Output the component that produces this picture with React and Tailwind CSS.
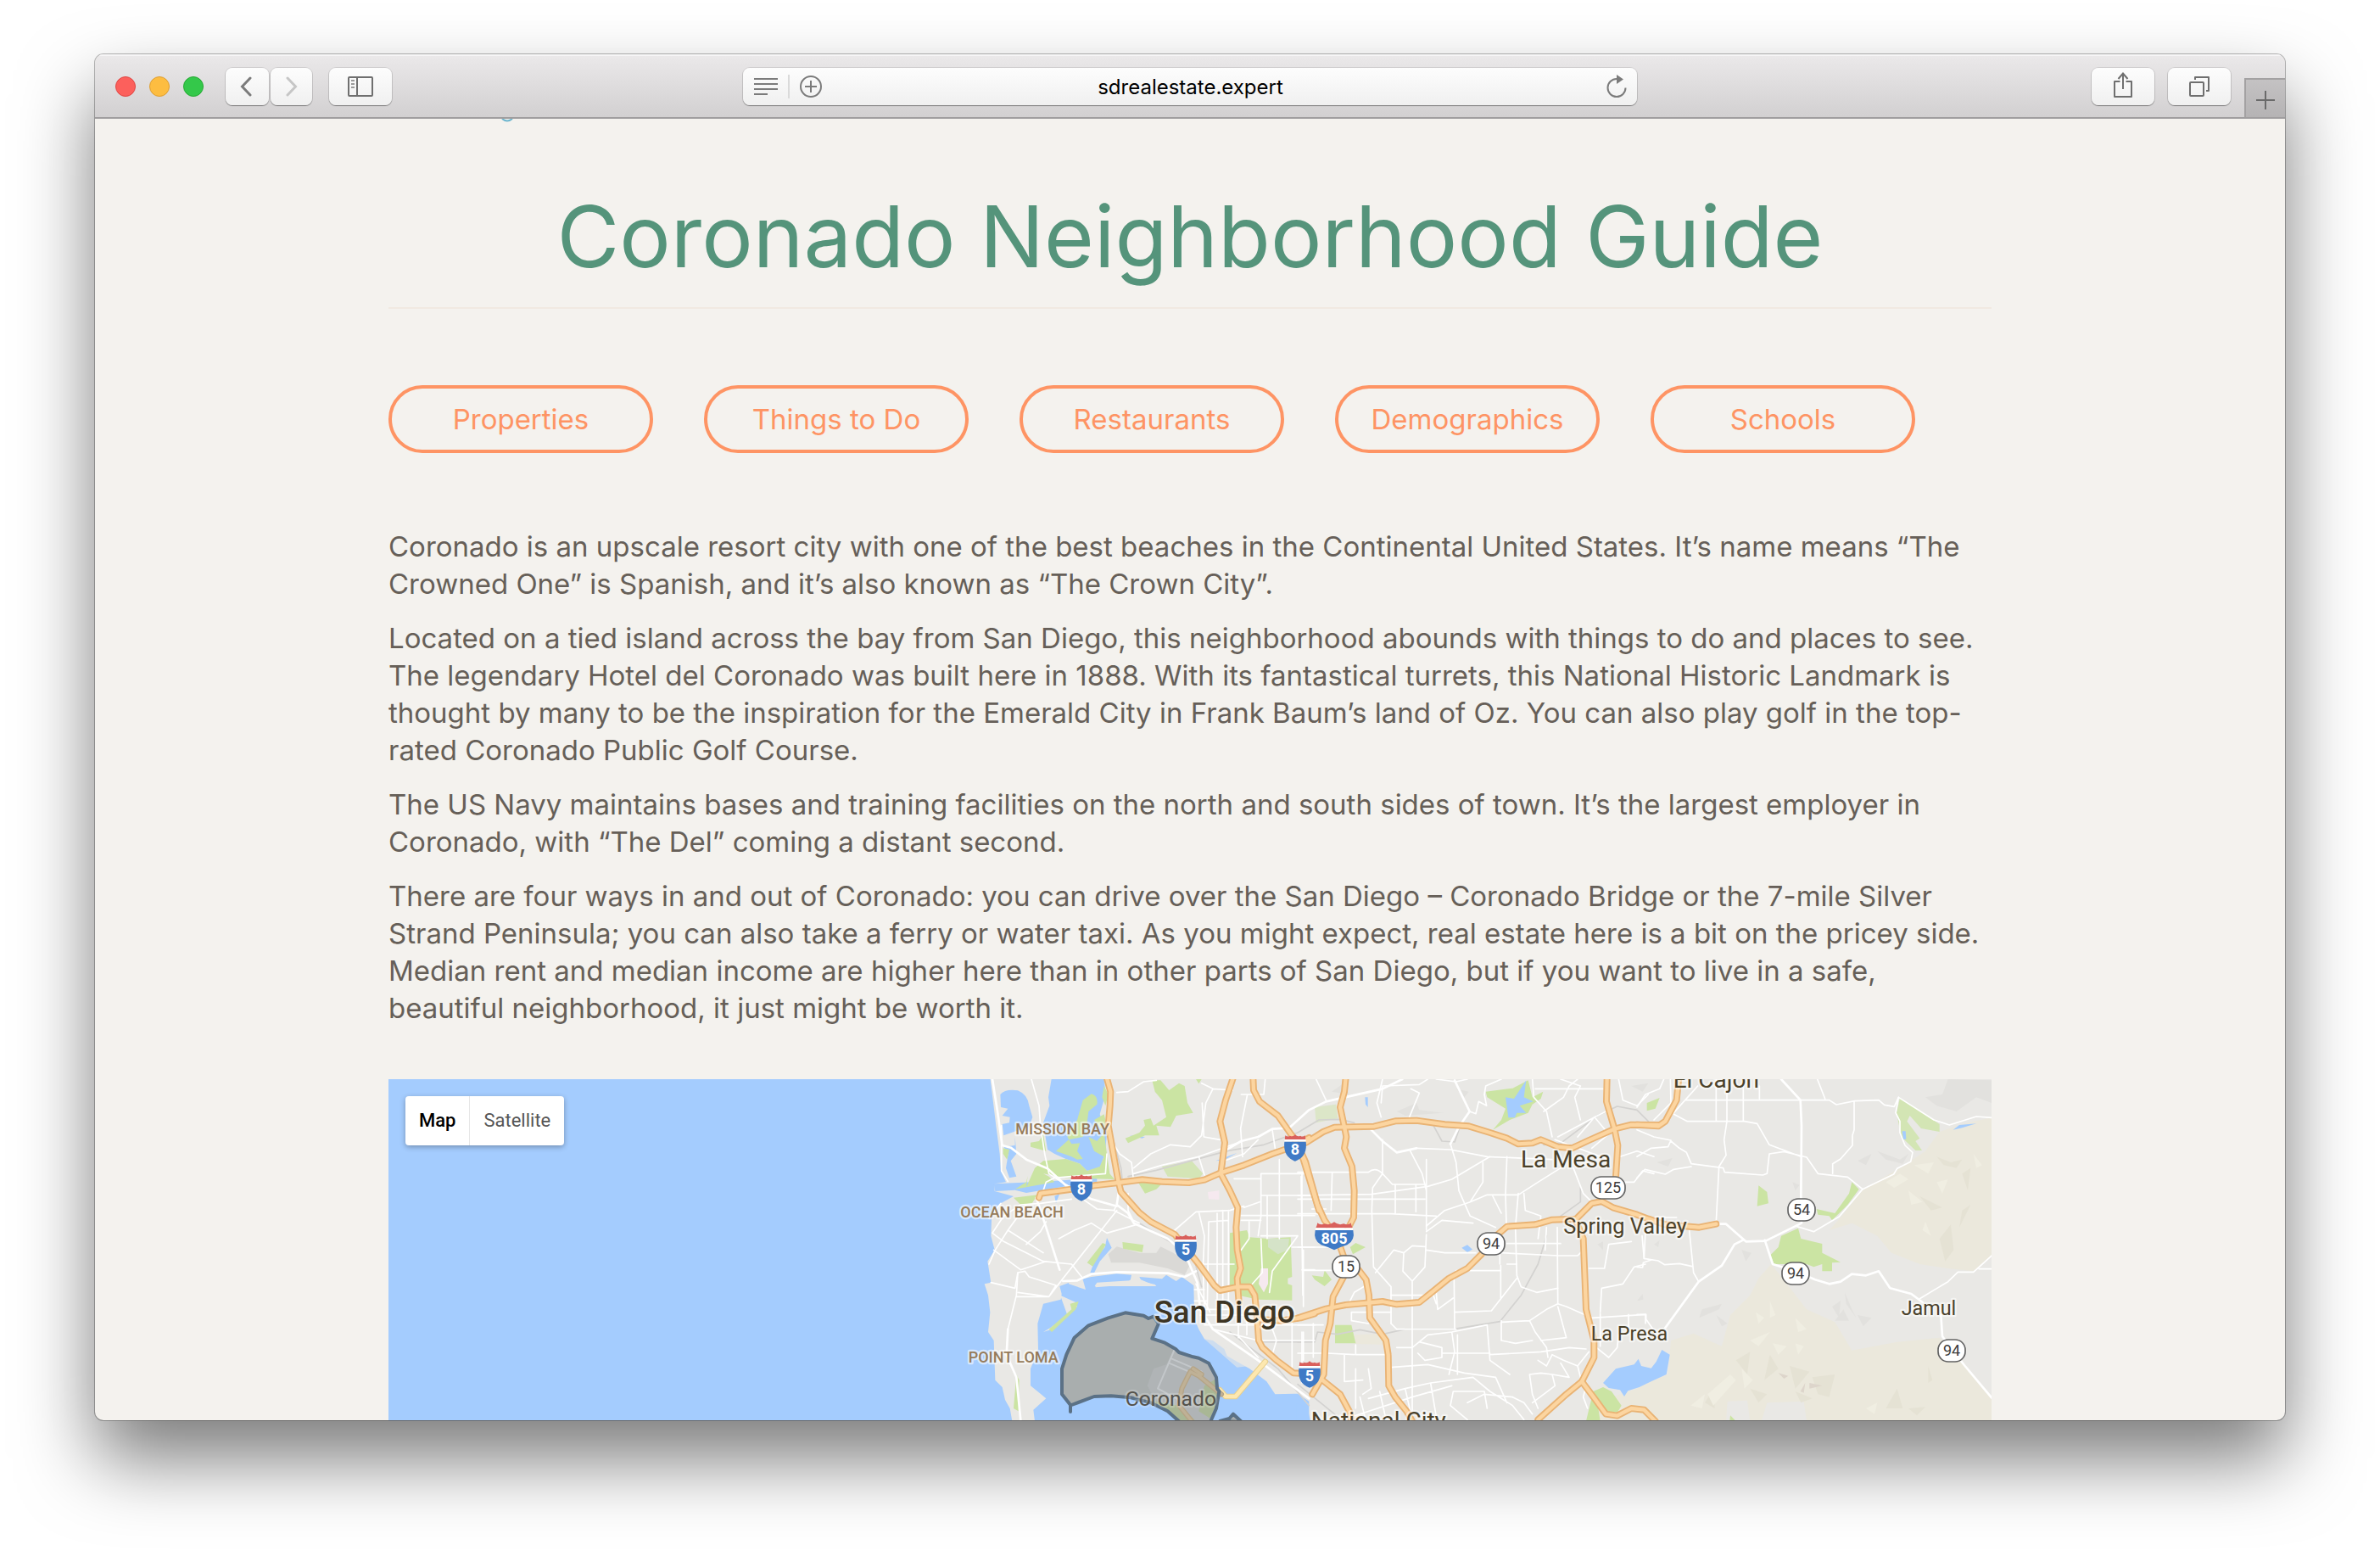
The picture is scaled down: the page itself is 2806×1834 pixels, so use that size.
import React from "react";

const links = ["Properties", "Things to Do", "Restaurants", "Demographics", "Schools"];

const paragraphs = [
  [
    "Coronado is an upscale resort city with one of the best beaches in the Continental United States. It’s name means “The",
    "Crowned One” is Spanish, and it’s also known as “The Crown City”.",
  ],
  [
    "Located on a tied island across the bay from San Diego, this neighborhood abounds with things to do and places to see.",
    "The legendary Hotel del Coronado was built here in 1888. With its fantastical turrets, this National Historic Landmark is",
    "thought by many to be the inspiration for the Emerald City in Frank Baum’s land of Oz. You can also play golf in the top-",
    "rated Coronado Public Golf Course.",
  ],
  [
    "The US Navy maintains bases and training facilities on the north and south sides of town. It’s the largest employer in",
    "Coronado, with “The Del” coming a distant second.",
  ],
  [
    "There are four ways in and out of Coronado: you can drive over the San Diego – Coronado Bridge or the 7-mile Silver",
    "Strand Peninsula; you can also take a ferry or water taxi. As you might expect, real estate here is a bit on the pricey side.",
    "Median rent and median income are higher here than in other parts of San Diego, but if you want to live in a safe,",
    "beautiful neighborhood, it just might be worth it.",
  ],
];

const WATER = "#a4ccfe";
const LAND = "#e9e8e5";
const PARK = "#cbe4a3";
const TAN = "#ebe8dc";
const RELIEF = "#e2e1de";

/* The map is drawn as three side-by-side sheets: west, central and east. */
const WEST = "translate(2016 -36)";
const CENTRAL = "translate(3216 -36)";
const EAST = "translate(4416 -36)";

const highways = [
  // west sheet
  [WEST, "M524 30 L538 80 L536 130 L530 200 L546 290 L566 400 L575 435 L640 508 L680 540 L765 585 L803 632 L850 690 L905 765 L925 783 L990 770 L1030 770 L1048 800 L1058 900 L1062 960 L1075 985 L1125 1030 L1185 1075 L1240 1078"],
  [WEST, "M285 455 L290 440 L400 425 L480 412 L566 402 L650 391 L720 398 L815 402 L870 392 L925 368 L1010 340 L1110 300 L1190 272 L1240 243"],
  [WEST, "M972 30 L945 110 L925 185 L942 260 L928 370 L960 430 L988 490 L982 560 L986 640 L998 705 L986 740 L990 800 L992 825"],
  [WEST, "M1042 30 L1044 75 L1065 115 L1130 165 L1190 250 L1220 320 L1260 450 L1275 500"],
  [WEST, "M1060 885 L1140 890 L1210 880 L1260 865"],
  // central sheet
  [CENTRAL, "M170 30 L165 80 L150 135 L165 205 L172 240 L165 280 L192 345 L200 430 L198 525 L175 570"],
  [CENTRAL, "M30 260 L90 222 L130 206 L270 203 L345 184 L420 182 L520 196 L605 202 L680 225 L740 245 L780 265 L830 262 L860 250 L920 275 L970 280 L1030 252 L1120 212 L1180 197 L1275 198"],
  [CENTRAL, "M10 290 L28 330 L70 480 L95 535 L140 600 L165 670 L215 710 L242 745 L252 800 L255 880 L312 960 L320 1010 L322 1120 L345 1160 L385 1210 L405 1245"],
  [CENTRAL, "M-5 882 L100 848 L170 834 L300 822 L350 832 L430 825 L480 785 L535 740 L600 705 L650 655 L690 600 L740 557 L840 550 L900 533 L985 530 L1040 475 L1075 468 L1115 490 L1200 515 L1240 530 L1300 550 L1420 560 L1480 548"],
  [CENTRAL, "M165 730 L125 805 L115 900 L98 960 L92 1080 L52 1150"],
  [CENTRAL, "M85 1098 L150 1150 L185 1215 L190 1245"],
  [CENTRAL, "M1094 30 L1092 115 L1120 210 L1132 270 L1125 380 L1110 440"],
  [CENTRAL, "M985 540 L1010 600 L1020 850 L1048 960 L1048 1020 L1005 1105 L950 1150 L850 1240"],
  [CENTRAL, "M1005 1105 L1050 1165 L1090 1220 L1130 1226 L1180 1200 L1225 1205 L1265 1245"],
  // east sheet
  [EAST, "M148 30 L140 110 L100 185 L75 202 L0 197"],
];

const arterials = [
  [WEST, "M120 36 L138 150 L155 270 L185 278 L240 320 L315 352 L380 412"],
  [WEST, "M275 455 L310 560 L358 710"],
  [WEST, "M380 410 L470 460 L560 485"],
  [WEST, "M370 750 L420 748 L470 725 L560 718 L740 722 L800 735 L840 715"],
  [WEST, "M175 920 L170 1010 L205 1090 L220 1242"],
  [WEST, "M566 440 L560 480 L600 510 L620 545 L740 600 L800 650 L845 755 L855 850 L900 920 L1060 1030 L1240 1165"],
  [WEST, "M940 290 L1000 255 L1060 240 L1110 212 L1170 208 L1240 145 L1300 115 L1500 70 L1570 36"],
  [CENTRAL, "M555 40 L608 150 L570 205 L540 265"],
  [CENTRAL, "M260 215 L300 255 L350 295 L420 280"],
  [EAST, "M510 36 L578 110 L582 200 L580 450 L582 545 L455 608 L385 610 L315 548 L285 548"],
  [EAST, "M375 605 L345 620 L300 695 L218 752 L100 915"],
  [EAST, "M452 605 L480 690 L560 715 L630 745 L680 760 L720 752 L760 725 L810 730 L855 715 L895 775 L970 795 L1010 825"],
  [EAST, "M1075 870 L1080 945 L1112 990 L1160 1050 L1254 1162"],
];

const streets = [
  [WEST, "M258 36 L285 130 L290 200 L305 300 L320 370 L380 410 M210 720 L205 800 L175 920 M620 370 L720 340 L850 310 L990 260"],
  [WEST, "M152 200 L152 360 L175 398 M300 430 L310 400 L340 385 L520 370 L525 300 M560 83 L600 80 L655 45 L700 40 M540 250 L570 300 L612 330 L620 400 M620 350 L680 300 L750 268 L820 275 L860 235 L875 120 L900 70 L860 50 M900 70 L970 75 M862 120 L868 240 L925 250"],
  [WEST, "M850 310 L870 375 M1000 90 L1080 90 L1085 36 M1022 90 L998 210 L1005 310 M1110 215 L1120 280 M940 325 L1010 300 L1060 250"],
  [WEST, "M120 580 L160 520 L220 480 L290 475 L400 460 M150 475 L120 510 M120 580 L160 610 L300 680 L400 690 L440 740 M125 640 L220 710 L310 680 M108 690 L130 640 L175 570 L240 480 M175 570 L300 650 M240 620 L290 575 L310 540"],
  [WEST, "M115 755 L200 775 L210 720 L235 715 L250 735 L345 765 L320 805 L210 790 M205 805 L320 805 L370 740 L560 500 M355 600 L410 570 L470 545 L525 580 L630 550 M560 480 L550 500 L490 495 L440 460 M550 500 L640 545 M600 440 L600 500 L620 540"],
  [WEST, "M765 570 L840 505 L960 500 L1010 485 M850 505 L870 590 L865 700 L870 860 M885 540 L955 535 M885 540 L880 850 M915 510 V840 M935 500 V850 M955 500 V850 M865 690 H975 M840 760 L890 860 M835 780 H870 M835 820 H880 M840 850 H960 M855 870 H1040"],
  [WEST, "M975 388 H1070 M1070 370 H1240 M1070 370 V520 L1060 590 M1135 320 V600 M1070 447 H1260 M1000 518 H1260 M1092 450 V600 M1215 370 V620 M1010 490 L1065 470 M1000 535 H1070 M1028 540 V600 L1000 640 M1070 590 H1200 L1110 715 L1100 790 M1070 600 L1075 720 L1035 765 M1180 630 H1260 M1215 710 H1260 M1220 640 V840"],
  [WEST, "M870 905 H1260 M990 860 V950 M1020 860 V940 M900 920 L1060 960 L1260 960 M1180 890 V1060 M1215 930 V1110 M1125 960 L1110 1010 M1100 890 L1125 960 M990 945 L1060 1020"],
  [CENTRAL, "M540 265 L560 330 L570 430 L610 520 L700 560 M420 280 L540 285 L670 310 L900 320"],
  [CENTRAL, "M65 36 L100 110 M300 36 L280 120 L295 170 M300 60 L430 55 L460 36 M400 70 L430 85 L395 170 M608 150 L630 158 L640 115 L668 130 L660 90 L665 60 L720 36 M490 36 L560 45 L600 36 M300 60 L295 120"],
  [CENTRAL, "M0 365 H250 Q275 345 300 370 L335 408 H455 M300 250 L300 370 L265 420 L262 500 L268 700 L330 770 L330 900 M0 460 H450 M0 512 H330 L490 520 M12 380 L18 800 M122 365 L118 500 M0 447 L260 443 L460 415 L545 390 L680 310 M345 408 V510 M418 408 V505 M455 320 V570 M398 290 L440 370 L455 430 M50 495 H100"],
  [CENTRAL, "M455 575 L510 535 L620 545 M455 555 L520 500 L610 470 L670 445 H780 L850 400 L930 350 M655 330 L655 400 L610 470 M740 310 L735 445 L738 550 M690 450 L720 510 M800 440 L805 500 L860 520 L850 600 M780 440 L770 560 L775 730 L790 770 L845 790 L920 775"],
  [CENTRAL, "M830 36 L835 100 L880 150 L900 240 M870 150 L940 100 L960 60 L990 36 M840 70 H1090 M930 36 L1000 60 L980 100 L1000 180 M920 240 L1050 170 L1090 150 M990 240 L1050 170 L1100 230 L1040 280 M1135 36 L1150 110 L1200 130 L1240 90 M910 250 L1100 320 M975 350 L1010 440 L1040 470 M1140 310 L1200 290 L1260 310 M1140 400 L1190 400 L1220 360 L1260 370"],
  [CENTRAL, "M740 617 H930 M715 635 V690 M720 650 L920 660 H990 L1010 640 M880 560 L875 640 M918 560 L920 830 M740 690 H775 M718 695 V810 M560 713 H715 M775 740 L685 855 L555 860 M553 740 L555 920 M455 585 L450 700 L405 750 V1240 M340 640 L375 650 L405 625 L450 628 M375 650 L372 715 L405 750 M340 640 L275 720 M455 640 L520 650 L630 650"],
  [CENTRAL, "M0 630 H140 M18 712 H130 M330 800 H480 L490 830 M490 790 L495 850 L550 810 M250 760 L200 790 L185 820 M190 860 H330 M190 860 V890 L250 900 M330 900 L350 920 H560 M20 930 V1030 M55 900 V1020 M0 905 H90 M105 1005 L200 1010 M205 975 V1010 H330 M165 1010 V1105 L230 1100 M205 1060 V1200 M250 1060 L260 1130 L230 1150 M0 1005 H90"],
  [CENTRAL, "M350 985 H405 L460 940 L545 930 L670 905 L680 1030 L750 1080 M430 965 L510 985 V1020 L450 1030 L425 1005 M510 1005 H680 M565 940 V1080 M545 930 L555 1000 L535 1080 M720 890 V960 L770 970 L830 960 M720 895 L820 890 L880 850 L920 830 L950 840 L1040 880 L1230 868 M820 890 L840 930 L880 985 L885 1020 M920 840 L950 950 L860 960 M680 1010 L860 1000 L960 985 L1020 990"],
  [CENTRAL, "M330 1055 L460 1045 L590 1075 L700 1090 M250 1165 L380 1130 L470 1110 L620 1090 L680 1140 L760 1190 L800 1240 M470 1110 L490 1230 M550 1140 L540 1190 L600 1240 M550 1140 H660 L670 1200 M190 1230 L405 1160 L545 1120 M220 1160 L240 1240 M290 1140 L310 1230 M380 1130 L405 1240 M700 1090 L740 1180 M600 1180 L660 1150 L760 1160"],
  [CENTRAL, "M850 1030 L880 1050 L900 1010 L940 1030 L990 1050 L1000 1090 M820 1080 L860 1075 L900 1080 L910 1120 L830 1180 M820 1080 L830 1150 L850 1200 M930 1040 L960 1090 L900 1080 M760 1160 L800 1180 L830 1220 M1020 1120 L1010 1160 L1025 1200 M990 1050 L1030 1000 M1050 980 L1100 1020 L1130 985 L1135 940 M1070 860 L1075 775 L1150 760 L1190 700 L1230 690 M1230 570 L1225 670 M1070 865 V980 M1030 705 L1085 705 L1100 620 L1180 610 M1170 868 V920 M1230 868 V900"],
  [EAST, "M0 135 L30 90 L80 70 L95 36 M60 180 L120 120 L118 36 M280 36 V185 M318 80 V185 L308 250 L315 305 L290 345 L280 540 M376 60 V185 M433 60 V105 M170 110 H680 L705 126 L770 113 L855 110 L875 127 L910 133 L925 100 M638 36 L665 105 M130 160 L178 185 H380 L425 193 L468 268 L580 310 M130 155 L215 60 M0 215 L60 240 L120 252 L110 275 L50 280 L0 310 M120 255 L150 280 L175 295 L192 335 L305 350 L310 365 L445 375 L460 370 L468 300 L520 292 L600 312 L640 370 L745 382 L798 425 M192 345 L130 355 L100 372 L28 355 L0 385"],
  [EAST, "M768 115 V215 L762 235 L762 270 L720 318 L692 335 V370 M925 100 L1050 180 L1105 198 L1200 168 L1254 172 M925 100 L915 155 L930 185 L930 225 L948 270 L975 295 L968 328 L920 352 L908 372 L798 425 L715 522 L625 575 L560 555 M185 570 L200 720 L218 752 M18 590 L25 670 L75 678 L98 692 L150 688 L195 698 M0 700 L20 702 L22 685 L50 675 M0 868 H32 L32 885 L60 925 M1000 812 L1100 752 L1135 718 H1190 L1254 660 M1210 707 H1254 M140 525 H60"],
];

const rails = [
  [WEST, "M550 260 L575 350 L580 400 M600 380 L700 358 L950 290 L1080 268 L1200 225 L1275 180 L1350 178 L1400 190 M640 545 L830 660 L860 770 M960 930 L1130 1060 L1240 1190 M1060 965 H1220"],
  [CENTRAL, "M480 200 L510 255 L555 258 L570 215 M870 268 L930 262 L1060 165 L1130 132 L1200 145 L1240 185 M1000 420 L1000 470 L930 520 M0 965 H60 L70 930 L140 938 L220 922 L300 938 L380 920 L550 920 L715 893 L790 800 L850 690 L880 590 M0 1115 L130 1220 L150 1245"],
];

const cityLabels = [
  [WEST, 941, 897, 110, "San Diego", "font-medium", "#3d3524"],
  [WEST, 751, 1191, 74, "Coronado", "font-normal", "#55524b"],
  [CENTRAL, 948, 347, 84, "La Mesa", "font-normal", "#4b412a"],
  [CENTRAL, 1158, 581, 76, "Spring Valley", "font-normal", "#4b412a"],
  [CENTRAL, 1173, 960, 70, "La Presa", "font-normal", "#4b412a"],
  [CENTRAL, 286, 1273, 84, "National City", "font-normal", "#4b412a"],
  [EAST, 280, 65, 84, "El Cajon", "font-normal", "#4b412a"],
  [EAST, 1032, 869, 70, "Jamul", "font-normal", "#4b412a"],
  [WEST, 368, 232, 54, "MISSION BAY", "font-medium", "#967b5a"],
  [WEST, 189, 526, 54, "OCEAN BEACH", "font-medium", "#967b5a"],
  [WEST, 194, 1039, 54, "POINT LOMA", "font-medium", "#967b5a"],
];

function Roads({ list, color, width }) {
  return list.map(([sheet, d]) => (
    <path key={d} transform={sheet} d={d} fill="none" stroke={color} strokeWidth={width} strokeLinejoin="round" strokeLinecap="round" />
  ));
}

function Interstate({ x, y, label, wide }) {
  return (
    <g transform={`translate(${x} ${y})`}>
      {wide ? (
        <>
          <path d="M-65 -32 Q-58 -48 -60 -50 Q-48 -40 -34 -47 Q-15 -40 0 -53 Q15 -40 34 -47 Q48 -40 60 -50 Q58 -48 65 -32Z" fill="#d9605c" />
          <path d="M-66 -32 H66 V-24 H-66Z" fill="#fff" />
          <path d="M-67 -24 H67 Q75 12 46 28 Q20 36 0 46 Q-20 36 -46 28 Q-75 12 -67 -24Z" fill="#3f7ac6" />
        </>
      ) : (
        <>
          <path d="M-37 -30 L-35 -44 Q-27 -37 -18 -43 Q-8 -38 0 -47 Q8 -38 18 -43 Q27 -37 35 -44 L37 -30Z" fill="#d9605c" />
          <path d="M-38 -30 H38 V-22 H-38Z" fill="#fff" />
          <path d="M-38 -22 H38 Q44 32 0 47 Q-44 32 -38 -22Z" fill="#3f7ac6" />
        </>
      )}
      <text y="23" textAnchor="middle" fontSize="54" fill="#fff" className="font-bold">{label}</text>
    </g>
  );
}

function StateRoute({ x, y, label, half = 48 }) {
  return (
    <g transform={`translate(${x} ${y})`}>
      <rect x={-half} y="-39" width={half * 2} height="78" rx="36" fill="#fff" stroke="#636363" strokeWidth="5" />
      <text y="19" textAnchor="middle" fontSize="54" fill="#3c3c3c">{label}</text>
    </g>
  );
}

function MapDrawing() {
  return (
    <svg viewBox="0 0 5670 1206" className="block w-full font-['Roboto',sans-serif]" role="img" aria-label="Map of the San Diego area with Coronado outlined">
      <rect width="5670" height="1206" fill={LAND} />

      {/* hills and open country */}
      <g transform={EAST}>
        <path d="M1254 172 L1150 195 L1070 222 L1020 290 L930 350 L800 425 L720 525 L680 570 L760 545 L850 590 L900 650 L1000 690 L1100 705 L1190 715 L1254 660Z" fill={TAN} />
        <path d="M0 1245 L-30 1160 L20 1120 L110 1080 L120 960 L200 935 L300 980 L330 870 L400 800 L430 740 L475 690 L530 760 L600 850 L700 895 L760 995 L920 965 L1070 950 L1160 1050 L1254 1162 V1245Z" fill={TAN} />
        <path d="M-180 1245 L-120 1170 L0 1130 L60 1100 L60 1245Z" fill={TAN} />
        <path d="M315 1245 L320 1175 L390 1172 L400 1245Z M460 1180 L590 1175 L600 1245 H440Z" fill={LAND} />
        <path d="M1100 36 L1254 40 V120 L1200 100 L1130 150 L1060 130 L1020 100 L1080 90Z M780 325 L830 300 L810 340Z M850 290 L930 320 L960 300 L940 335 L880 320Z M690 840 L720 820 L715 880Z M735 790 L760 850 L775 880 L740 830Z M780 870 L830 880 L800 910Z M730 850 L750 890 L700 890Z M230 850 L300 830 L290 850 L220 880Z M280 870 L320 900 L300 910Z M370 640 L405 650 L385 680Z M60 620 L80 605 L75 630Z M550 400 L575 410 L560 430Z M70 330 L125 315 L110 345Z" fill={RELIEF} />
        <path d="M1060 310 L1110 330 L1150 320 L1130 350 L1085 340Z M1150 370 L1180 350 L1170 430Z M1180 480 L1140 560 L1150 500Z M1070 600 L1110 550 L1120 640 L1090 680Z M1000 450 L1080 490 L1040 500Z M350 1030 L400 1000 L390 1080Z M470 1010 L500 1060 L450 1100Z M540 1050 L610 1070 L560 1130Z M620 1090 L700 1080 L680 1160 L640 1150Z M400 1130 L460 1150 L430 1180Z M880 1200 L920 1130 L940 1200Z M960 1200 L1020 1195 L990 1225Z M240 1180 L270 1130 L275 1200Z M1030 1050 L1045 1100 L1030 1110Z M560 1140 L620 1165 L580 1180Z" fill="#e5e2d4" />
        <path d="M880 400 L930 370 L960 390 L910 420Z M980 340 L1050 330 L1030 370Z M960 430 L1010 470 L970 480Z M1060 400 L1100 390 L1080 440Z M1190 300 L1220 340 L1200 350Z M1020 540 L1040 590 L1010 570Z M470 820 L490 870 L470 880Z M420 860 L450 880 L430 900Z M400 960 L470 930 L430 980Z M560 880 L600 920 L570 930Z M480 970 L530 980 L500 1010Z M250 1150 L330 1080 L350 1100 L270 1190Z M370 1060 L410 1100 L380 1130Z M560 970 L590 980 L570 1010Z M190 1190 L240 1150 L230 1200Z M810 1200 L850 1180 L840 1220Z" fill="#f0eee2" />
        <path d="M500 1075 L535 1085 L520 1095Z M578 1140 L595 1110 L590 1145Z M610 1110 L655 1120 L610 1130Z" fill="#ddd5cb" />
      </g>
      <g transform={CENTRAL}>
        <path d="M350 150 L420 120 L430 145 L515 155 L380 165Z M560 70 L605 80 L590 100Z M120 80 L170 45 L180 90Z M1180 60 L1240 50 L1220 80Z M1200 820 L1220 795 L1222 815Z M1060 620 L1080 610 L1080 640Z" fill={RELIEF} />
        <path d="M200 940 L320 935 L320 975 L205 972Z" fill={TAN} />
      </g>

      {/* water */}
      <g transform={WEST} fill={WATER}>
        <path d="M-2016 30 H112 L122 110 L133 200 L146 300 L150 360 L168 400 L128 406 L128 432 L195 450 L150 475 L118 510 L115 590 L128 640 L103 680 L115 755 L92 760 L105 800 L112 860 L105 930 L125 960 L130 1100 L155 1125 L165 1170 L182 1200 L190 1245 H-2016Z" />
        <path d="M148 90 Q165 70 210 76 Q245 90 250 130 L262 170 L250 205 L215 215 L160 235 L155 195 L180 190 L182 170 L155 165 L175 140 L150 135Z" />
        <path d="M330 30 H515 L520 90 L500 160 L525 230 L518 300 L500 350 L455 360 L430 335 L380 318 L340 300 L315 285 L300 190 L322 130 L318 100Z" />
        <path d="M200 240 L205 300 L185 325 L205 380 L180 385 L168 350 L176 300 L160 275 L200 270Z" />
        <path d="M125 406 L300 398 L490 386 L490 402 L380 415 L240 438 L200 428 L130 432Z M340 450 L358 440 L345 475Z" />
        <path d="M525 597 L542 632 L500 680 L478 725 L466 720 L485 670 L518 630Z" />
        <path d="M358 768 L400 752 L470 735 L560 724 L612 728 L608 748 L490 755 L482 768 L560 768 L700 768 L645 745 L640 735 L720 742 L735 728 L770 750 L790 735 L832 765 L835 885 L850 920 L870 955 L900 960 L940 990 L950 1015 L1030 1060 L1090 1105 L1120 1150 L1200 1148 L1240 1175 L1240 1245 H270 L265 1205 L310 1165 L290 1148 L255 1120 L255 1060 L282 990 L280 900 L300 830 L362 815 L365 795Z" />
        <path d="M605 235 L660 240 L650 245Z M910 325 L985 297 L940 322Z" />
      </g>
      <g transform={CENTRAL} fill={WATER}>
        <path d="M-5 1180 L35 1200 L45 1245 H-5Z M238 100 H248 V135 L240 125Z M580 632 L600 622 L618 638 L600 648Z" />
      </g>

      {/* islands and spits */}
      <g transform={WEST} fill={LAND}>
        <path d="M484 764 L600 752 L612 742 L695 762 L700 768 L640 760 L485 772Z" />
        <path d="M300 930 L330 920 L420 840 L415 825 L360 800 L385 870 L325 915Z" />
        <path d="M390 740 L440 745 L450 780 L390 760Z" />
        <path d="M870 955 L910 935 L960 960 L940 985 L1010 1000 L1030 1050 L985 1055Z" opacity=".6" />
      </g>
      <g transform={WEST} fill="#dad9d6">
        <path d="M530 655 L560 628 L640 650 L700 650 L715 628 L760 650 L820 690 L800 728 L740 705 L640 685 L540 685Z" />
      </g>

      {/* parks */}
      <g transform={WEST} fill={PARK}>
        <path d="M470 88 Q495 95 490 125 L460 150 L455 190 L440 240 L390 250 L345 290 L400 310 L420 320 L440 318 L420 290 L430 262 L400 265 L385 240 L420 180 L440 110Z" />
        <path d="M460 240 L490 255 L515 225 L525 300 L535 370 L552 390 L380 385 L300 370 L320 380 L340 400 L240 418 L200 425 L240 400 L245 378 L240 418 L270 350 L300 325 L380 318 L430 335 L455 360 L500 345 L515 310 L480 290Z M515 60 L530 90 L520 130 L508 100Z M480 180 L515 160 L525 200 L500 210Z" />
        <path d="M255 260 L285 255 L300 230 L310 290 L255 275Z M195 455 L280 445 L260 475 L220 480Z M158 280 L180 285 L172 320 L158 300Z" />
        <path d="M685 40 H715 L745 75 L780 50 L800 60 L810 120 L830 155 L770 165 L750 205 L700 200 L710 235 L660 235 L600 262 L590 245 L640 225 L660 200 L655 180 L680 175 L690 200 L735 170 L720 110 L695 80Z M840 36 H860 L850 52Z" />
        <path d="M720 345 L825 325 L865 370 L850 388 L740 380Z" opacity=".7" />
        <path d="M635 400 L720 405 L700 425 L660 440Z M580 612 L655 622 L650 648 L582 635Z M455 685 L510 615 L522 620 L475 698Z" />
        <path d="M960 580 L1020 570 L1030 595 L1095 600 L1175 595 L1180 735 L1165 740 V760 L1180 765 V818 L1060 815 L990 800 L960 770Z" />
        <path d="M395 830 L425 822 L415 850 L330 930 L320 920 L400 850Z M205 1080 L215 1100 L212 1210 L195 1200Z" />
      </g>
      <path transform={WEST} d="M1095 600 H1170 L1165 640 L1130 655 L1095 630Z" fill="#d5e3c8" />
      <path transform={WEST} d="M1070 705 H1095 V760 L1080 790 L1062 760Z M882 435 L922 430 V462 L885 460Z" fill="#f6e9ef" />
      <g transform={CENTRAL} fill={PARK}>
        <path d="M665 80 L760 68 L815 40 L830 100 L868 80 L860 105 L830 125 L815 155 L750 180 L690 215 L720 180 L735 140 L670 100Z" />
        <path d="M132 905 H190 L205 970 H132Z M185 630 L205 615 L240 630 L195 655Z M50 730 L90 735 L95 712 L120 745 L95 768 L60 745Z M1235 120 L1280 102 L1265 140 L1235 148Z" />
        <path d="M1020 1245 L1045 1140 L1080 1125 L1110 1140 L1145 1190 L1130 1215 L1090 1210 L1060 1180 L1070 1245Z" />
        <path d="M60 135 L135 125 L142 175 L65 190Z" opacity=".45" />
      </g>
      <g transform={CENTRAL} fill={WATER}>
        <path d="M808 40 L800 100 L833 115 L785 130 L808 155 L775 155 L768 172 L745 172 L735 100 L765 105Z" />
        <path d="M1080 1110 L1125 1060 L1190 1045 L1205 1025 L1215 1050 L1250 1058 L1268 1035 L1288 993 L1316 1010 L1304 1080 L1250 1105 L1208 1125 L1168 1138 L1155 1158 L1140 1135 L1100 1128Z" />
      </g>
      <g transform={EAST} fill={PARK}>
        <path d="M430 412 L460 435 L465 475 L425 485Z M760 400 L785 425 L745 480 L690 535 L680 520 L640 515 L635 495 L700 510 L750 440Z" />
        <path d="M510 590 L570 563 L580 600 L655 618 V650 L720 683 L690 685 V715 H655 V690 L625 700 L600 690 L485 690 L472 658 L500 630Z M330 1225 L350 1245 H328Z" />
        <path d="M930 103 L1070 195 V222 L1005 210 L965 165 L955 185 L1000 245 L985 255 L1008 288 L985 288 L935 240 L918 155Z" opacity=".75" />
      </g>
      <path transform={EAST} d="M938 220 H950 L952 248 H942Z M1118 215 L1140 198 L1200 193 L1150 208Z" fill={WATER} />

      {/* roads */}
      <Roads list={rails} color="#d3d2d0" width="5" />
      <Roads list={streets} color="#fff" width="5" />
      <Roads list={arterials} color="#fff" width="8" />
      <Roads list={highways} color="#e9b374" width="24" />
      <Roads list={highways} color="#fcd5a0" width="13" />
      <g transform={WEST} fill="none" strokeLinejoin="round" strokeLinecap="round">
        <path d="M925 1135 L945 1158 L980 1158 L1085 1035" stroke="#e8d08e" strokeWidth="20" />
        <path d="M925 1135 L945 1158 L980 1158 L1085 1035" stroke="#fde8b0" strokeWidth="14" />
      </g>

      {/* Coronado outline */}
      <g transform={WEST} strokeLinejoin="round" strokeLinecap="round">
        <path d="M400 1188 L366 1150 L366 1060 L382 1010 L410 950 L460 907 L530 880 L590 862 L655 872 L672 882 L690 875 L708 900 L685 953 L730 968 L768 990 L780 1002 L850 1022 L890 1050 L912 1090 L922 1130 L908 1215 L890 1250 H785 L740 1210 L680 1180 L610 1162 L540 1156 L480 1158Z" fill="#a9aeae" />
        <path d="M765 990 L850 1022 L890 1050 L912 1090 L922 1130 L908 1215 L890 1250 H800 L740 1205 L690 1160 L668 1120 L690 1060 L735 1045Z" fill="#b0b4b6" />
        <path d="M870 1120 L912 1095 L915 1180 L890 1235 L850 1210Z M690 1175 L780 1190 L840 1245 H790Z" fill="#a9b795" />
        <path d="M765 990 L705 1130 L780 1170 M755 1025 L860 1070 M745 1040 L850 1085" fill="none" stroke="#c3c7ca" strokeWidth="6" />
        <path d="M930 1150 L850 1085 L820 1070 L790 1130 L780 1190 L825 1245 M830 1060 L860 1080" fill="none" stroke="#b5a486" strokeWidth="18" />
        <path d="M930 1150 L850 1085 L820 1070 L790 1130 L780 1190 L825 1245 M830 1060 L860 1080" fill="none" stroke="#bfb196" strokeWidth="10" />
        <path d="M396 1212 L396 1188 L366 1150 L366 1060 L382 1010 L410 950 L460 907 L530 880 L590 862 L655 872 L672 882 L690 875 L708 900 L685 953 L730 968 L768 990 L780 1002 L830 1018 L850 1022 L885 1040 L912 1090 L915 1130 L922 1140 L912 1200 L890 1250 M785 1250 L740 1210 L680 1180 L610 1162 L540 1156 L480 1158 L400 1188" fill="none" stroke="#5b7186" strokeWidth="12" />
        <path d="M925 1245 L958 1236 L972 1220 L1002 1248Z" fill="#a9aeae" stroke="#5b7186" strokeWidth="12" />
      </g>

      {/* route shields */}
      <Interstate x={2451} y={384} label="8" />
      <Interstate x={3207} y={243} label="8" />
      <Interstate x={2820} y={597} label="5" />
      <Interstate x={3258} y={1044} label="5" />
      <Interstate x={3345} y={558} label="805" wide />
      <StateRoute x={3387} y={663} label="15" />
      <StateRoute x={3900} y={582} label="94" />
      <StateRoute x={4314} y={384} label="125" half={60} />
      <StateRoute x={4998} y={462} label="54" />
      <StateRoute x={4977} y={687} label="94" />
      <StateRoute x={5529} y={960} label="94" />

      {cityLabels.map(([sheet, x, y, size, name, weight, color]) => (
        <text
          key={name}
          transform={sheet}
          x={x}
          y={y}
          fontSize={size}
          fill={color}
          textAnchor="middle"
          stroke="#fff"
          strokeOpacity={name === "Coronado" ? 0.2 : 0.55}
          strokeWidth="14"
          strokeLinejoin="round"
          paintOrder="stroke"
          className={weight}
        >
          {name}
        </text>
      ))}
    </svg>
  );
}

const chromeButton =
  "flex h-11 items-center justify-center rounded-lg bg-linear-to-b from-[#fdfdfd] to-[#f0f0f0] shadow-[0_0_0_1px_rgba(0,0,0,0.10),0_1px_1px_rgba(0,0,0,0.35)]";

function Toolbar() {
  return (
    <header className="grid h-[76px] grid-cols-[1fr_minmax(0,1054px)_1fr] items-start border-b-2 border-[#a09e9f] bg-linear-to-b from-[#ebe9ea] to-[#d2d0d1] shadow-[inset_0_2px_0_#f6f5f6]">
      <div className="flex items-center pt-4 pl-6">
        <div className="flex gap-4">
          <button aria-label="Close" className="size-6 rounded-full border border-[#df4744] bg-[#fc605c]" />
          <button aria-label="Minimize" className="size-6 rounded-full border border-[#de9f34] bg-[#fdbd41]" />
          <button aria-label="Zoom" className="size-6 rounded-full border border-[#27a934] bg-[#34c84a]" />
        </div>
        <div className="ml-[26px] flex gap-[2px]">
          <button aria-label="Back" className={`${chromeButton} w-[51px]`}>
            <svg viewBox="0 0 14 24" className="mr-1 h-6 w-3.5" fill="none" stroke="#7b7b7b" strokeWidth="3" strokeLinecap="round" strokeLinejoin="miter">
              <path d="M12 2 L2.5 12 L12 22" />
            </svg>
          </button>
          <button aria-label="Forward" className={`${chromeButton} w-[49px]`}>
            <svg viewBox="0 0 14 24" className="h-6 w-3.5" fill="none" stroke="#c6c6c6" strokeWidth="3" strokeLinecap="round" strokeLinejoin="miter">
              <path d="M2 2 L11.5 12 L2 22" />
            </svg>
          </button>
        </div>
        <button aria-label="Show sidebar" className={`${chromeButton} ml-5 w-[74px]`}>
          <svg viewBox="0 0 30 24" className="h-6 w-[30px]" fill="none" stroke="#6f6f6f" strokeWidth="2">
            <rect x="1" y="1" width="28" height="22" rx="1" />
            <path d="M11 1 V23" />
            <path d="M4 5 H8 M4 9 H8 M4 13 H8" stroke="#9a9a9a" />
          </svg>
        </button>
      </div>

      <div className="pt-4">
        <div className="flex h-11 items-center rounded-lg bg-linear-to-b from-[#fdfdfd] to-[#f0f0f0] pr-3 pl-[13px] shadow-[0_0_0_1px_rgba(0,0,0,0.10),0_1px_1px_rgba(0,0,0,0.35)]">
          <button aria-label="Reader view">
            <svg viewBox="0 0 28 22" className="h-[22px] w-7" stroke="#7b7b7b" strokeWidth="2">
              <path d="M0 2 H28 M0 8 H28 M0 14 H28 M0 20 H16" />
            </svg>
          </button>
          <span className="mx-3 h-7 w-[2px] bg-[#dadada]" />
          <button aria-label="Add to reading list">
            <svg viewBox="0 0 26 26" className="size-[26px]" fill="none" stroke="#7b7b7b" strokeWidth="2">
              <circle cx="13" cy="13" r="12" />
              <path d="M13 6 V20 M6 13 H20" />
            </svg>
          </button>
          <input
            aria-label="Address"
            defaultValue="sdrealestate.expert"
            className="h-9 min-w-0 flex-1 bg-transparent pr-[56px] text-center font-['Inter',sans-serif] text-2xl text-black outline-none"
          />
          <button aria-label="Reload">
            <svg viewBox="0 0 24 28" className="h-7 w-6" fill="none" stroke="#7b7b7b" strokeWidth="2">
              <path d="M12 5 A10.5 10.5 0 1 0 22.5 15.5" />
              <path d="M12 0 V11 L20 5.500Z" fill="#7b7b7b" stroke="none" />
            </svg>
          </button>
        </div>
      </div>

      <div className="flex items-start justify-end gap-4">
        <button aria-label="Share" className={`${chromeButton} mt-4 w-[74px]`}>
          <svg viewBox="0 0 22 30" className="mb-1 h-[30px] w-[22px]" fill="none" stroke="#6f6f6f" strokeWidth="2">
            <path d="M7.500 11 H1 V29 H21 V11 H14.500" strokeLinejoin="round" />
            <path d="M11 20 V1.500 M5.500 8 L11 1.500 L16.500 8" />
          </svg>
        </button>
        <button aria-label="Show all tabs" className={`${chromeButton} mt-4 w-[74px]`}>
          <svg viewBox="0 0 24 24" className="size-6" fill="none" stroke="#6f6f6f" strokeWidth="2" strokeLinejoin="round">
            <rect x="1" y="7" width="16" height="16" rx="1" />
            <path d="M7 4 V1 H23 V17 H20" />
          </svg>
        </button>
        <button aria-label="New tab" className="mt-7 flex h-[46px] w-12 items-center justify-center border-t-2 border-l-2 border-[#a3a1a2] bg-linear-to-b from-[#c4c2c3] to-[#b5b3b4]">
          <svg viewBox="0 0 22 22" className="mt-1 size-[22px]" stroke="#6a6a6a" strokeWidth="2">
            <path d="M11 0 V22 M0 11 H22" />
          </svg>
        </button>
      </div>
    </header>
  );
}

export default function App() {
  return (
    <div className="flex min-h-screen flex-col bg-white px-28 pt-16 pb-40">
      <div className="flex flex-1 flex-col overflow-hidden rounded-[10px] bg-[#f4f2ee] shadow-[0_0_0_1px_rgba(0,0,0,0.28),0_46px_88px_rgba(0,0,0,0.52)]">
        <Toolbar />
        <main className="mx-auto w-[73.2%] font-['Inter',sans-serif] text-[33px] leading-[44px] text-[#665f58]">
          <svg viewBox="0 0 14 4" className="ml-[133px] h-1 w-3.5" fill="none" stroke="#6cb6cf" strokeWidth="2" aria-hidden="true">
            <path d="M1 0 Q7 5 13 0" />
          </svg>
          <h1 className="border-b-2 border-[#f1e9e1] pt-[72px] pb-[22px] text-center text-[101px] leading-[124px] text-[#55947b]">
            Coronado Neighborhood Guide
          </h1>
          <nav className="mt-[90px] flex gap-[60px]">
            {links.map((label) => (
              <a
                key={label}
                href={`#${label.toLowerCase().replaceAll(" ", "-")}`}
                className="flex h-20 w-[312px] items-center justify-center rounded-full border-4 border-[#fe9464] text-[#fe9464]"
              >
                {label}
              </a>
            ))}
          </nav>
          <div className="mt-[88px] flex flex-col gap-5">
            {paragraphs.map((lines) => (
              <p key={lines[0]}>
                {lines.map((line, i) => (
                  <React.Fragment key={line}>
                    {i > 0 && <br />}
                    {line}
                  </React.Fragment>
                ))}
              </p>
            ))}
          </div>
          <section className="relative mt-[62px]">
            <MapDrawing />
            <div className="absolute top-5 left-5 flex overflow-hidden rounded-sm bg-white font-['Roboto',sans-serif] text-[22px] shadow-[0_2px_6px_rgba(0,0,0,0.3)]">
              <button className="h-[58px] border-r border-[#e6e6e6] px-4 font-medium text-black">Map</button>
              <button className="h-[58px] px-4 text-[#565656]">Satellite</button>
            </div>
          </section>
        </main>
      </div>
    </div>
  );
}
